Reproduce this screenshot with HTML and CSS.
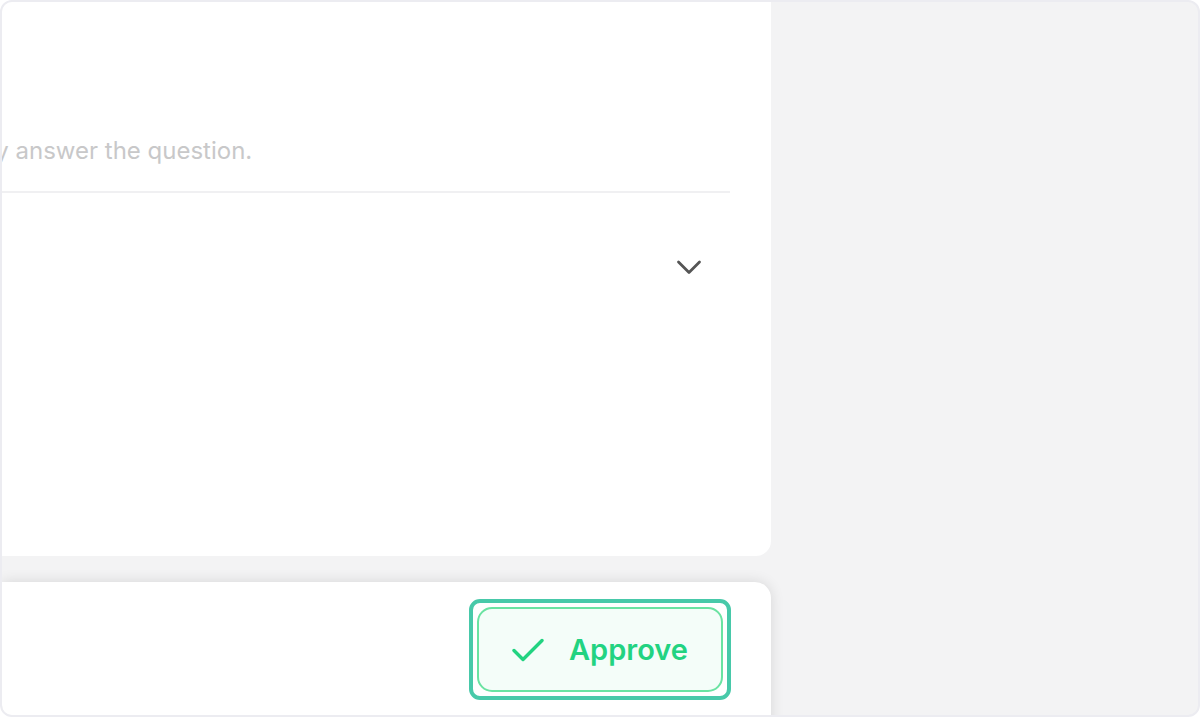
FILE: index.html
```html
<!DOCTYPE html>
<html>
<head>
    <meta charset="UTF-8">
    <title>Review</title>
    <link rel="stylesheet" href="styles.css">
</head>
<body>
    <div class="frame">
        <div class="column">
            <div class="card question-card">
                <p class="hint">Read the passage above and clearly answer the question.</p>
                <div class="divider"></div>
                <div class="select-row">
                    <span class="select-value"></span>
                    <svg class="chevron" width="26" height="16" viewBox="0 0 26 16">
                        <path d="M2.5 3l10.5 10.5L23.5 3" fill="none" stroke="#555" stroke-width="2.8" stroke-linecap="round" stroke-linejoin="round"/>
                    </svg>
                </div>
            </div>

            <div class="card action-bar">
                <span class="focus-ring">
                    <button class="approve-button">
                        <svg width="32" height="26" viewBox="0 0 32 26">
                            <path d="M2 13.5l9 9L30 3.5" fill="none" stroke="#22d381" stroke-width="3.4" stroke-linecap="round" stroke-linejoin="round"/>
                        </svg>
                        <span>Approve</span>
                    </button>
                </span>
            </div>
        </div>
    </div>
</body>
</html>
```

FILE: styles.css
```css
body {
    margin: 0;
    font-family: Inter, "Noto Sans", sans-serif;
    background-color: #ffffff;
}

.frame {
    height: 717px;
    box-sizing: border-box;
    border: 2px solid #ececf1;
    border-radius: 12px;
    background-color: #f3f3f4;
    overflow: hidden;
}

.column {
    width: 769px;
    display: flex;
    flex-direction: column;
    gap: 26px;
}

.card {
    background-color: #ffffff;
}

.question-card {
    height: 554px;
    padding-right: 41px;
    border-radius: 0 0 15px 0;
    overflow: hidden;
}

.hint {
    margin: 0;
    padding-top: 134px;
    margin-left: -404px; /* the start of the sentence is off-screen */
    white-space: nowrap;
    font-size: 24px;
    line-height: 30px;
    color: #c8c8c9;
}

.divider {
    height: 2px;
    margin-top: 25px;
    background-color: #f0f0f2;
}

.select-row {
    display: flex;
    justify-content: space-between;
    align-items: center;
    height: 148px;
    padding-right: 28px;
}

.chevron {
    display: block;
}

.action-bar {
    height: 150px;
    padding-top: 17px;
    padding-right: 40px;
    box-sizing: border-box;
    display: flex;
    justify-content: flex-end;
    align-items: flex-start;
    border-radius: 0 16px 0 0;
    box-shadow: 0 0 14px rgba(0, 0, 0, 0.12);
}

.focus-ring {
    display: block;
    padding: 4px;
    border: 4px solid #48c9a9;
    border-radius: 11px;
}

.approve-button {
    display: flex;
    align-items: center;
    gap: 25px;
    width: 246px;
    height: 85px;
    padding: 0 0 0 33px;
    border: 2px solid #6ae3a2;
    border-radius: 15px;
    background-color: #f4fdf9;
    color: #22d381;
    font-family: Inter, "Noto Sans", sans-serif;
    font-size: 29px;
    font-weight: 600;
    cursor: pointer;
}

.approve-button svg {
    display: block;
}
```
